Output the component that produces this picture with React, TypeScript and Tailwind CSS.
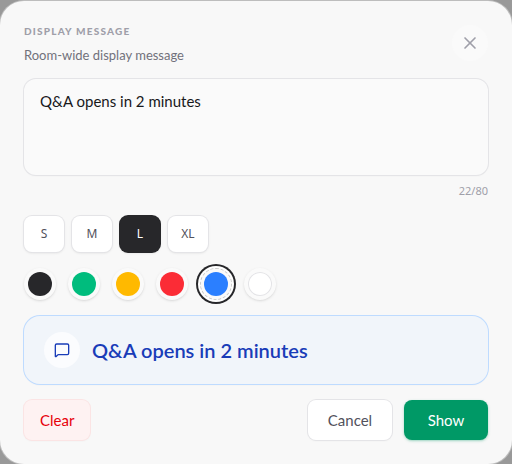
import { useState } from "react";
import { clsx } from "clsx";
import { MessageSquare, X } from "lucide-react";

const LIMIT = 80;
const SIZES = ["S", "M", "L", "XL"];
const COLORS = [
  { name: "Black", dot: "bg-[#27272a]" },
  { name: "Green", dot: "bg-[#00bc7d]" },
  { name: "Amber", dot: "bg-[#ffb900]" },
  { name: "Red", dot: "bg-[#fb2c36]" },
  { name: "Blue", dot: "bg-[#2b7fff]" },
  { name: "White", dot: "bg-white ring-1 ring-inset ring-zinc-200" },
];

export default function App() {
  const [message, setMessage] = useState("Q&A opens in 2 minutes");
  const [size, setSize] = useState("L");
  const [color, setColor] = useState("Blue");

  return (
    <main className="min-h-screen bg-[#999999] pt-px font-['Lato','Noto_Sans',sans-serif]">
      <section
        role="dialog"
        aria-labelledby="dialog-title"
        className="w-full rounded-3xl bg-[#f8f8f8] p-6 shadow-[0_0_0_1px_#bdbdbd]"
      >
        <header className="flex h-[38px] items-start justify-between">
          <div>
            <h1 id="dialog-title" className="text-[10px] leading-3 font-black tracking-[0.12em] text-[#9f9fa9] uppercase">
              Display message
            </h1>
            <p className="mt-2 text-[13px] leading-5 text-[#71717b]">Room-wide display message</p>
          </div>
          <button type="button" aria-label="Close" className="flex size-9 items-center justify-center rounded-full bg-[#fafafa] text-[#9f9fa9]">
            <X size={20} strokeWidth={2} />
          </button>
        </header>

        <textarea
          aria-label="Message"
          maxLength={LIMIT}
          value={message}
          onChange={(e) => setMessage(e.target.value)}
          className="mt-4 block h-24 w-full resize-none rounded-xl bg-[#fafafa] px-4 py-3 text-[15px] leading-5 text-[#18181b] shadow-xs ring-1 ring-[#e4e4e7] outline-none"
        />
        <p className="mt-2 text-right font-['Noto_Sans',sans-serif] text-[11px] leading-4 text-[#9f9fa9]">
          {message.length}/{LIMIT}
        </p>

        <div className="mt-[17px] flex gap-2">
          {SIZES.map((s) => (
            <button
              key={s}
              type="button"
              aria-pressed={s === size}
              onClick={() => setSize(s)}
              className={clsx(
                "h-9 w-10 rounded-lg font-['Noto_Sans',sans-serif] text-xs shadow-sm ring-1",
                s === size ? "bg-[#27272a] text-white ring-[#27272a]" : "bg-white text-[#52525c] ring-[#e4e4e7]",
              )}
            >
              {s}
            </button>
          ))}
        </div>

        <div className="mt-4 flex gap-3">
          {COLORS.map((c) => (
            <button
              key={c.name}
              type="button"
              aria-label={c.name}
              aria-pressed={c.name === color}
              onClick={() => setColor(c.name)}
              className={clsx(
                "flex size-8 items-center justify-center rounded-full bg-[#fafafa]",
                c.name === color
                  ? "border border-dashed border-[#cacaca] ring-2 ring-[#27272a] ring-offset-2 ring-offset-white"
                  : "shadow-sm",
              )}
            >
              <span className={clsx("size-6 shrink-0 rounded-full", c.dot)} />
            </button>
          ))}
        </div>

        <div className="mt-4 flex items-center gap-3 rounded-2xl bg-[#f1f5fa] px-5 py-4 text-[#193cb8] shadow-xs ring-1 ring-[#bedbff]">
          <span className="flex size-9 shrink-0 items-center justify-center rounded-full bg-[#fbfcfe]">
            <MessageSquare size={16} strokeWidth={2} />
          </span>
          <p className="text-xl leading-7 font-semibold">{message}</p>
        </div>

        <footer className="mt-4 flex gap-3 text-[15px] leading-5">
          <button type="button" onClick={() => setMessage("")} className="mr-auto h-10 rounded-lg bg-[#fef2f2] px-4 text-[#e7000b] shadow-xs ring-1 ring-[#fbe4e4]">
            Clear
          </button>
          <button type="button" className="h-10 w-[84px] rounded-lg bg-white text-[#52525c] shadow-xs ring-1 ring-[#e4e4e7]">
            Cancel
          </button>
          <button type="button" className="h-10 w-[84px] rounded-lg bg-[#009966] text-white shadow-sm shadow-[#009966]/30">
            Show
          </button>
        </footer>
      </section>
    </main>
  );
}
